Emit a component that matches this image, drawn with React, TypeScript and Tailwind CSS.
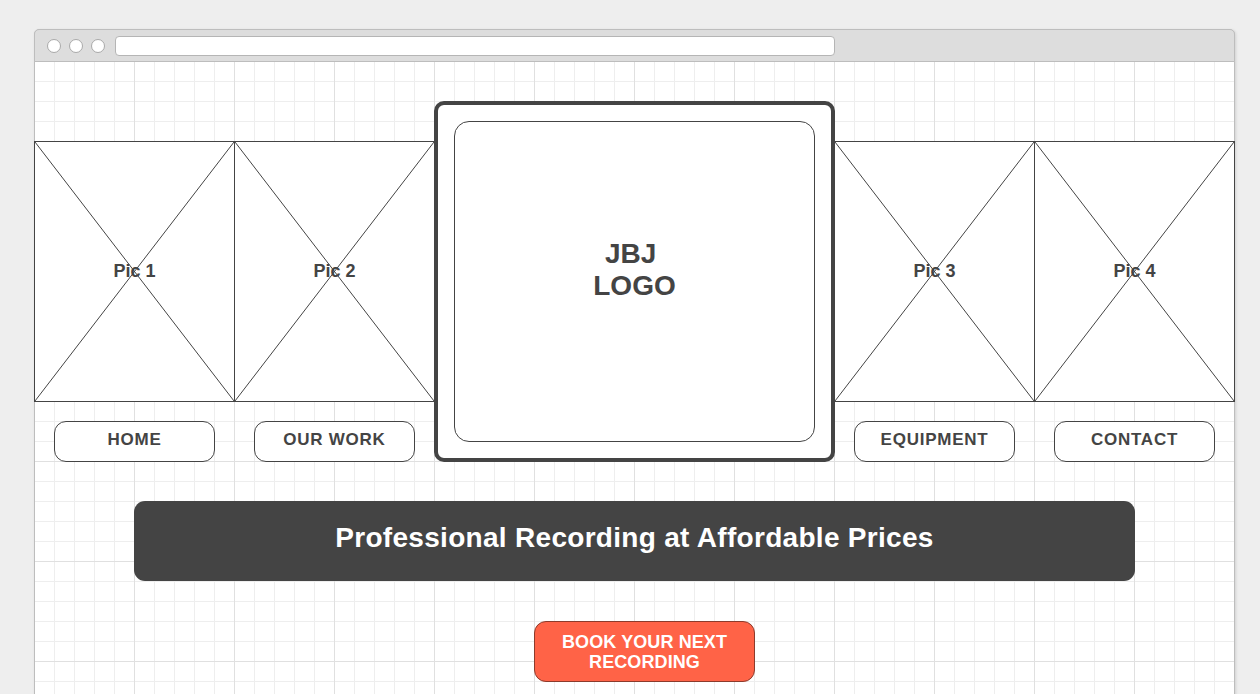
import type { ReactNode } from 'react';

const gridBg =
  'bg-[linear-gradient(to_right,#e0e0e0_1px,transparent_1px),linear-gradient(to_bottom,#e0e0e0_1px,transparent_1px),linear-gradient(to_right,#eeeeee_1px,transparent_1px),linear-gradient(to_bottom,#eeeeee_1px,transparent_1px)] [background-size:100px_100px,100px_100px,20px_20px,20px_20px] [background-position:0_32px]';

const Pic = ({ label, className = '' }: { label: string; className?: string }) => {
  return (
    <div className={'relative h-[261px] w-[201px] border border-[#444] bg-white ' + className}>
      <svg className="absolute inset-0 h-full w-full" viewBox="0 0 100 100" preserveAspectRatio="none">
        <line x1="0" y1="0" x2="100" y2="100" stroke="#444" strokeWidth="1" vectorEffect="non-scaling-stroke" />
        <line x1="100" y1="0" x2="0" y2="100" stroke="#444" strokeWidth="1" vectorEffect="non-scaling-stroke" />
      </svg>
      <div className="relative flex h-full items-center justify-center text-[18px] font-bold text-[#444]">{label}</div>
    </div>
  );
};

const NavButton = ({ children }: { children: ReactNode }) => {
  return (
    <div className="ml-[20px] mt-[19px] flex h-[41px] w-[161px] items-center justify-center rounded-[12px] border border-[#444] bg-white pb-[3px] text-[17px] font-bold tracking-[0.75px] text-[#444]">
      {children}
    </div>
  );
};

const PicColumn = ({ label, nav, className = '' }: { label: string; nav: string; className?: string }) => {
  return (
    <div className={'flex flex-col pt-[79px] ' + className}>
      <Pic label={label} />
      <NavButton>{nav}</NavButton>
    </div>
  );
};

const App = () => {
  return (
    <div className="min-h-screen overflow-hidden bg-[#eeeeee] pl-[34px] pt-[29px] font-['Liberation_Sans',Arial,sans-serif]">
      <div
        className={
          'w-[1201px] rounded-t-[5px] bg-white shadow-[1px_1px_3px_rgba(0,0,0,0.12)] ring-1 ring-inset ring-[#bdbdbd] ' + gridBg
        }
      >
        {/* browser chrome */}
        <div className="flex h-[33px] items-center rounded-t-[5px] border border-[#bdbdbd] bg-[#dddddd] pl-[12px]">
          <div className="flex items-center gap-[8px]">
            <span className="h-[14px] w-[14px] rounded-full border border-[#a9a9a9] bg-white" />
            <span className="h-[14px] w-[14px] rounded-full border border-[#a9a9a9] bg-white" />
            <span className="h-[14px] w-[14px] rounded-full border border-[#a9a9a9] bg-white" />
          </div>
          <div className="ml-[10px] h-[20px] w-[720px] rounded-[4px] border border-[#b5b5b5] bg-white" />
        </div>

        {/* page */}
        <div className="pb-[60px]">
          <div className="flex items-start">
            <PicColumn label="Pic 1" nav="HOME" />
            <PicColumn label="Pic 2" nav="OUR WORK" className="-ml-px" />

            <div className="-ml-px mt-[39px] h-[361px] w-[401px] rounded-[10px] border-4 border-[#444] bg-white p-[16px]">
              <div className="flex h-full items-center justify-center rounded-[15px] border border-[#444] bg-white pb-[23px] text-center text-[28px] font-bold leading-[32px] text-[#444]">
                <span>
                  JBJ{'\u00a0'}
                  <br />
                  LOGO
                </span>
              </div>
            </div>

            <PicColumn label="Pic 3" nav="EQUIPMENT" className="-ml-px" />
            <PicColumn label="Pic 4" nav="CONTACT" className="-ml-px" />
          </div>

          <div className="ml-[100px] mt-[39px] flex h-[80px] w-[1001px] items-center justify-center rounded-[11px] bg-[#444444] pb-[7px] text-[28px] font-bold tracking-[0.3px] text-white">
            Professional Recording at Affordable Prices
          </div>

          <div className="ml-[500px] mt-[40px] flex h-[61px] w-[221px] items-center justify-center rounded-[12px] border border-[#8c3b2c] bg-[#ff6347] pt-px text-center text-[18px] font-bold leading-[20px] tracking-[0.1px] text-white">
            BOOK YOUR NEXT
            <br />
            RECORDING
          </div>
        </div>
      </div>
    </div>
  );
};

export default App;
